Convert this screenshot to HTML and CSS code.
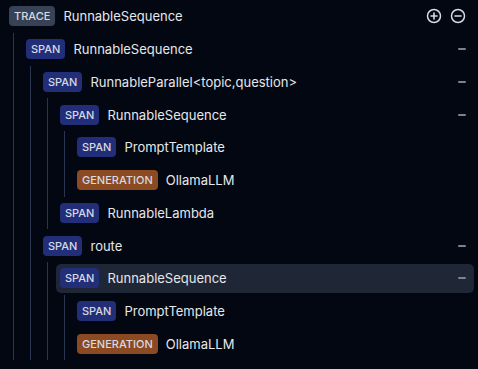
FILE: index.html
```html
<!DOCTYPE html>
<html lang="en">
<head>
<meta charset="utf-8">
<title>Trace tree</title>
<link rel="stylesheet" href="styles.css">
</head>
<body>
<div class="tree">
  <div class="node">
    <div class="row">
      <span class="badge trace">TRACE</span>
      <span class="name">RunnableSequence</span>
      <span class="actions">
        <svg class="circle-icon" viewBox="0 0 16 16" width="16" height="16"><circle cx="8" cy="8" r="6.5" fill="none" stroke="currentColor" stroke-width="1.5"/><path d="M8 5v6M5 8h6" stroke="currentColor" stroke-width="1.6" stroke-linecap="round"/></svg>
        <svg class="circle-icon" viewBox="0 0 16 16" width="16" height="16"><circle cx="8" cy="8" r="6.5" fill="none" stroke="currentColor" stroke-width="1.5"/><path d="M5 8h6" stroke="currentColor" stroke-width="1.6" stroke-linecap="round"/></svg>
      </span>
    </div>
    <div class="children">
      <div class="node">
        <div class="row">
          <span class="badge span">SPAN</span>
          <span class="name">RunnableSequence</span>
          <span class="collapse"></span>
        </div>
        <div class="children">
          <div class="node">
            <div class="row">
              <span class="badge span">SPAN</span>
              <span class="name">RunnableParallel&lt;topic,question&gt;</span>
              <span class="collapse"></span>
            </div>
            <div class="children">
              <div class="node">
                <div class="row">
                  <span class="badge span">SPAN</span>
                  <span class="name">RunnableSequence</span>
                  <span class="collapse"></span>
                </div>
                <div class="children">
                  <div class="node"><div class="row"><span class="badge span">SPAN</span><span class="name">PromptTemplate</span></div></div>
                  <div class="node"><div class="row"><span class="badge generation">GENERATION</span><span class="name">OllamaLLM</span></div></div>
                </div>
              </div>
              <div class="node"><div class="row"><span class="badge span">SPAN</span><span class="name">RunnableLambda</span></div></div>
            </div>
          </div>
          <div class="node">
            <div class="row">
              <span class="badge span">SPAN</span>
              <span class="name">route</span>
              <span class="collapse"></span>
            </div>
            <div class="children">
              <div class="node">
                <div class="row selected">
                  <span class="badge span">SPAN</span>
                  <span class="name">RunnableSequence</span>
                  <span class="collapse"></span>
                </div>
                <div class="children">
                  <div class="node"><div class="row"><span class="badge span">SPAN</span><span class="name">PromptTemplate</span></div></div>
                  <div class="node"><div class="row"><span class="badge generation">GENERATION</span><span class="name">OllamaLLM</span></div></div>
                </div>
              </div>
            </div>
          </div>
        </div>
      </div>
    </div>
  </div>
</div>
</body>
</html>
```

FILE: styles.css
```css
html, body {
  margin: 0;
  padding: 0;
  background: #030712;
  width: 478px;
  height: 369px;
  overflow: hidden;
}

body {
  font-family: Inter, "Noto Sans", sans-serif;
  color: #e5e7eb;
}

.tree {
  display: flex;
  flex-direction: column;
  padding: 0 4px 0 5px;
}

.node,
.children {
  display: flex;
  flex-direction: column;
}

.row {
  display: flex;
  align-items: center;
  height: 28.75px;
  margin: 2px 0;
  padding: 0 8px 0 4px;
  border-radius: 5px;
}

.row.selected {
  background: #1f2636;
}

.badge {
  display: inline-flex;
  align-items: center;
  height: 20px;
  padding: 0 5px;
  border-radius: 4px;
  font-size: 11px;
  font-weight: 500;
  color: #d5dae3;
}

.badge.trace { background: #374256; }
.badge.span { background: #222e78; }
.badge.generation { background: #8b4a21; }

.name {
  margin-left: 8px;
  font-size: 13px;
  flex: 1;
  white-space: nowrap;
}

.actions {
  display: flex;
  gap: 8px;
  color: #d6dae1;
}

.collapse {
  width: 8px;
  height: 2px;
  background: #7c8291;
  border-radius: 1px;
}

.children {
  margin-left: 8px;
  border-left: 1px solid #2a3550;
  padding-left: 8px;
}
```
